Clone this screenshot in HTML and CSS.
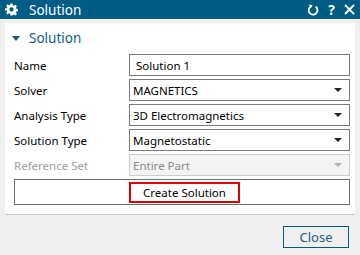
FILE: index.html
```html
<!DOCTYPE html>
<html lang="en">
<head>
  <meta charset="UTF-8">
  <title>Solution</title>
  <link rel="stylesheet" href="styles.css">
</head>
<body>
  <div class="titlebar">
    <svg class="gear" width="13" height="13" viewBox="0 0 24 24">
      <path fill="#fff" fill-rule="evenodd" d="M10 1h4l.6 3.2 1.9.8 2.7-1.9 2.8 2.8-1.9 2.7.8 1.9 3.1.5v4l-3.1.6-.8 1.9 1.9 2.7-2.8 2.8-2.7-1.9-1.9.8L14 23h-4l-.6-3.1-1.9-.8-2.7 1.9-2.8-2.8 1.9-2.7-.8-1.9L0 14v-4l3.1-.5.8-1.9L2 4.9l2.8-2.8 2.7 1.9 1.9-.8z M12 8a4 4 0 1 0 0 8a4 4 0 1 0 0-8z"/>
    </svg>
    <span class="title">Solution</span>
    <div class="tools">
      <svg width="12" height="12" viewBox="0 0 12 12"><path d="M4.2 2.2A4.4 4.4 0 1 0 8.6 2.6" fill="none" stroke="#fff" stroke-width="1.8"/><path d="M1.8 0.6L5.6 1.2 3.6 4.4z" fill="#fff"/></svg>
      <span class="help">?</span>
      <svg width="11" height="11" viewBox="0 0 11 11"><path d="M1 1L10 10M10 1L1 10" stroke="#fff" stroke-width="1.8"/></svg>
    </div>
  </div>

  <div class="panel">
    <div class="section">
      <span class="caret"></span>
      <span>Solution</span>
    </div>

    <div class="row">
      <label>Name</label>
      <div class="field">Solution 1</div>
    </div>
    <div class="row">
      <label>Solver</label>
      <div class="field select">MAGNETICS</div>
    </div>
    <div class="row">
      <label>Analysis Type</label>
      <div class="field select">3D Electromagnetics</div>
    </div>
    <div class="row">
      <label>Solution Type</label>
      <div class="field select">Magnetostatic</div>
    </div>
    <div class="row disabled">
      <label>Reference Set</label>
      <div class="field select">Entire Part</div>
    </div>

    <div class="actionbox">
      <button class="create">Create Solution</button>
    </div>
  </div>

  <div class="footer">
    <button class="close">Close</button>
  </div>
</body>
</html>
```

FILE: styles.css
```css
body {
  margin: 0;
  background: #f0f0f0;
  font-family: "Noto Sans", "Open Sans", sans-serif;
  font-size: 11.5px;
  color: #000;
}

.titlebar {
  height: 19px;
  background: #005c84;
  color: white;
  display: flex;
  align-items: center;
  padding: 0 5px 0 5px;
}

.gear {
  margin-right: 11px;
}

.title {
  font-size: 13.5px;
}

.tools {
  margin-left: auto;
  display: flex;
  align-items: center;
  gap: 9px;
}

.help {
  font-weight: bold;
  font-size: 14px;
  line-height: 12px;
}

.panel {
  margin: 4px 5px 0 5px;
  background: white;
  padding: 0 5px 9px 9px;
  border-bottom: 1px solid #c8c8c8;
}

.section {
  height: 30px;
  display: flex;
  align-items: center;
  color: #0b5f86;
  font-size: 13.5px;
  padding-bottom: 1px;
}

.caret {
  width: 0;
  height: 0;
  border-left: 4px solid transparent;
  border-right: 4px solid transparent;
  border-top: 5px solid #0b5f86;
  margin: 0 9px 0 -2px;
}

.row {
  display: flex;
  align-items: center;
  height: 22px;
  margin-bottom: 3px;
}

.row label {
  width: 115px;
  flex: none;
}

.field {
  flex: 1;
  height: 20px;
  border: 1px solid #7a7a7a;
  display: flex;
  align-items: center;
  padding: 0 6px;
  position: relative;
}

.select {
  padding-left: 3px;
}

.select::after {
  content: "";
  position: absolute;
  right: 7px;
  top: 8px;
  border-left: 4px solid transparent;
  border-right: 4px solid transparent;
  border-top: 4px solid #222;
}

.disabled label {
  color: #a0a0a0;
}

.disabled .field {
  border-color: #cccccc;
  background: #f3f3f3;
  color: #8a8a8a;
}

.disabled .select::after {
  border-top-color: #b0b0b0;
}

.actionbox {
  height: 20px;
  border: 1px solid #6e6e6e;
  padding: 2px 0 2px 114px;
}

.create {
  width: 111px;
  height: 21px;
  border: 2px solid #e00000;
  background: white;
  font-family: inherit;
  font-size: 11.5px;
  padding: 0;
}

.footer {
  display: flex;
  justify-content: flex-end;
  padding: 11px 11px 0 0;
}

.close {
  width: 66px;
  height: 22px;
  border: 1px solid #005c84;
  background: #f0f0f0;
  color: #1e5f85;
  font-family: inherit;
  font-size: 13px;
  padding: 0;
}
```
